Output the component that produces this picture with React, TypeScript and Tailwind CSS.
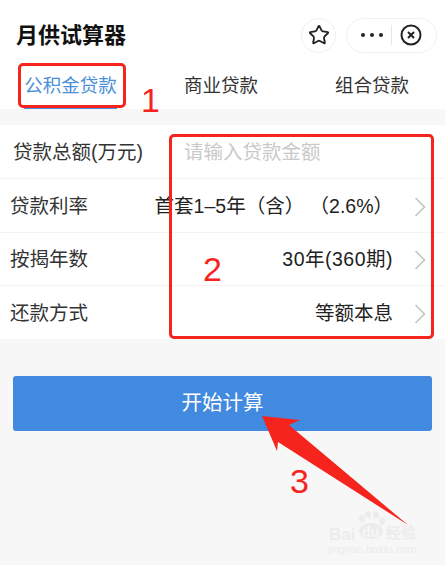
import { Star } from "lucide-react";

const font = { fontFamily: '"Liberation Sans", "Noto Sans CJK SC", sans-serif' };

function Chevron() {
  return (
    <svg width="12" height="20" viewBox="0 0 12 20" fill="none" stroke="#c4c4c4" strokeWidth="1.6" className="shrink-0">
      <path d="M1.5 1 L10.5 10 L1.5 19" />
    </svg>
  );
}

function Row({ label, value, h, spaced }: { label: string; value: string; h: string; spaced?: boolean }) {
  return (
    <div className={`flex ${h} items-center justify-between border-b border-[#f3f3f3] pl-[10px] pr-[19px] pt-[2px] last:border-b-0`}>
      <span className="text-[19.5px] text-[#333]">{label}</span>
      <div className="flex items-center gap-[21px]">
        <span className={`whitespace-pre text-[19.5px] text-[#222] ${spaced ? "tracking-[0.5px]" : ""}`}>{value}</span>
        <Chevron />
      </div>
    </div>
  );
}

export default function App() {
  return (
    <div className="relative h-[565px] w-[445px] overflow-hidden bg-[#f7f7f7]" style={font}>
      <div className="bg-white">
        <div className="flex h-[62px] items-center justify-between pl-[16px] pr-[8px] pt-[8px]">
          <span className="text-[22px] font-bold text-[#111]">月供试算器</span>
          <div className="flex items-center gap-[10px]">
            <div className="flex h-[35px] w-[35px] items-center justify-center rounded-full border border-[#f0f0f0]">
              <Star size={22} strokeWidth={2} color="#222" />
            </div>
            <div className="flex h-[35px] w-[91px] items-center justify-between rounded-full border border-[#f0f0f0] pl-[14px] pr-[14px]">
              <div className="flex gap-[5px]">
                <i className="h-[4px] w-[4px] rounded-full bg-[#222]" />
                <i className="h-[4px] w-[4px] rounded-full bg-[#222]" />
                <i className="h-[4px] w-[4px] rounded-full bg-[#222]" />
              </div>
              <div className="h-[20px] w-px bg-[#e6e6e6]" />
              <svg width="22" height="22" viewBox="0 0 22 22" fill="none" stroke="#222" strokeWidth="2">
                <circle cx="11" cy="11" r="9.5" />
                <path d="M8 8 L14 14 M14 8 L8 14" />
              </svg>
            </div>
          </div>
        </div>
        <div className="flex h-[47px] text-[18.5px]">
          <div className="ml-[24px] w-[93px] border-b-[3px] border-[#4a90e2] pt-[10px] text-center leading-[28px] text-[#4a8fd8]">公积金贷款</div>
          <div className="ml-[67px] w-[74px] pt-[10px] text-center leading-[28px] text-[#333]">商业贷款</div>
          <div className="ml-[77px] w-[74px] pt-[10px] text-center leading-[28px] text-[#333]">组合贷款</div>
        </div>
      </div>

      <div className="mt-[16px] bg-white">
        <div className="flex h-[54px] items-start border-b border-[#f3f3f3] pl-[13px] pt-[14px]">
          <span className="w-[171px] text-[19.5px] leading-[26px] text-[#333]">贷款总额(万元)</span>
          <span className="text-[19.5px] leading-[26px] text-[#c9c9c9]">请输入贷款金额</span>
        </div>
        <Row h="h-[54px]" label="贷款利率" value="首套1–5年（含） （2.6%）" />
        <Row h="h-[53px]" label="按揭年数" value="30年(360期)" spaced />
        <Row h="h-[53px]" label="还款方式" value="等额本息" />
      </div>

      <div className="px-[13px] pt-[37px]">
        <button className="h-[55px] w-full rounded-[3px] bg-[#428ae0] text-[20.5px] text-white">开始计算</button>
      </div>

      {/* annotations over the screenshot */}
      <div className="absolute left-[18px] top-[63px] h-[45px] w-[108px] rounded-[5px] border-[3px] border-[#f5241c]" />
      <div className="absolute left-[169px] top-[134px] h-[205px] w-[265px] rounded-[5px] border-[3px] border-[#f5241c]" />
      <span className="absolute left-[141px] top-[78px] text-[34px] leading-[44px] text-[#f5241c]">1</span>
      <span className="absolute left-[203px] top-[247px] text-[34px] leading-[44px] text-[#f5241c]">2</span>
      <span className="absolute left-[290px] top-[459px] text-[34px] leading-[44px] text-[#f5241c]">3</span>

      {/* watermark */}
      <svg className="absolute left-[356px] top-[511px]" width="30" height="30" viewBox="0 0 30 30" fill="#ececec">
        <ellipse cx="6" cy="8" rx="3" ry="4" />
        <ellipse cx="12" cy="3.5" rx="3" ry="3.5" />
        <ellipse cx="20" cy="4" rx="3" ry="3.5" />
        <ellipse cx="26" cy="10" rx="3" ry="4" />
        <ellipse cx="15" cy="20" rx="12" ry="8" />
      </svg>
      <div className="absolute left-[329px] top-[526px] text-[17px] font-bold leading-[17px] text-[#ececec]">Bai</div>
      <div className="absolute left-[362px] top-[525px] text-[14px] font-bold leading-[15px] text-[#f7f7f7]">du</div>
      <div className="absolute left-[386px] top-[524px] text-[15px] font-bold leading-[18px] text-[#ececec]">经验</div>
      <div className="absolute left-[328px] top-[544px] text-[11px] leading-[11px] text-[#ececec]">jingyan.baidu.com</div>

      <svg className="absolute left-0 top-0" width="445" height="565" viewBox="0 0 445 565">
        <path d="M262 416 L300 420 L289 425 L408 525 L278 442 L277 451 Z" fill="#f5241c" />
      </svg>
    </div>
  );
}
